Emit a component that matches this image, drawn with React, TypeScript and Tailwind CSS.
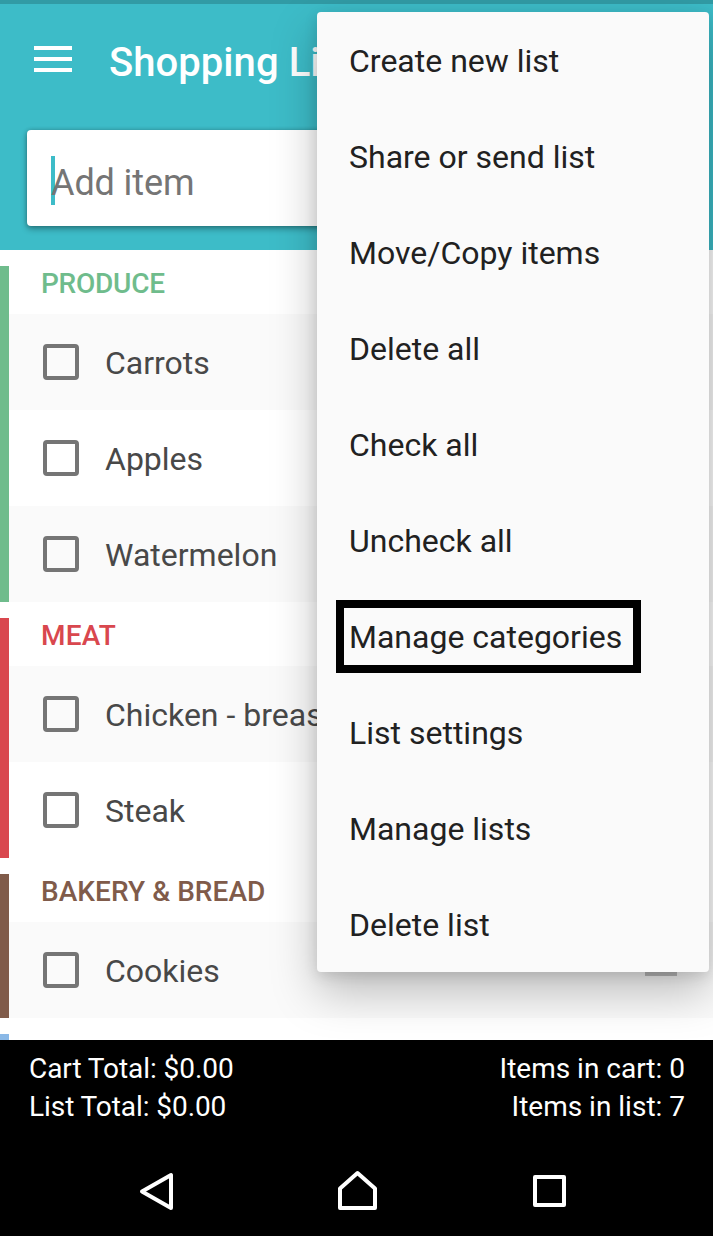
import { useState } from 'react';

type Category = {
  name: string;
  bar: string;
  text: string;
  items: string[];
};

const categories: Category[] = [
  {
    name: 'PRODUCE',
    bar: 'bg-[#6fbc8c]',
    text: 'text-[#6fbc8c] tracking-[-0.25px]',
    items: ['Carrots', 'Apples', 'Watermelon'],
  },
  {
    name: 'MEAT',
    bar: 'bg-[#d9474e]',
    text: 'text-[#d9474e] tracking-[0.2px]',
    items: ['Chicken - breast', 'Steak'],
  },
  {
    name: 'BAKERY & BREAD',
    bar: 'bg-[#805b4a]',
    text: 'text-[#805b4a] tracking-[0.05px]',
    items: ['Cookies'],
  },
  {
    name: '',
    bar: 'bg-[#8ab8e6]',
    text: 'text-[#8ab8e6]',
    items: [],
  },
];

const menuItems = [
  'Create new list',
  'Share or send list',
  'Move/Copy items',
  'Delete all',
  'Check all',
  'Uncheck all',
  'Manage categories',
  'List settings',
  'Manage lists',
  'Delete list',
];

function Header() {
  return (
    <header className="h-[250px] shrink-0 border-t-4 border-[#319ba5] bg-[#3dbcc8] pl-[27px]">
      <div className="flex h-[126px] items-start">
        <button className="ml-[7px] mt-[42px] flex w-[38px] flex-col gap-[7px]" aria-label="Open navigation">
          <span className="h-1 w-full bg-white" />
          <span className="h-1 w-full bg-white" />
          <span className="h-1 w-full bg-white" />
        </button>
        <h1 className="ml-[37px] mt-[35px] whitespace-nowrap text-[40px] font-medium leading-[48px] tracking-[0.05px] text-white">
          Shopping List
        </h1>
      </div>
      <div className="mr-[27px] flex h-24 items-center rounded bg-white pl-6 shadow-[0_3px_6px_rgba(0,0,0,0.32),0_0_4px_rgba(0,0,0,0.2)]">
        <span className="mt-[5px] h-[49px] w-1 bg-[#3dbcc8]" />
        <span className="-ml-1 mt-[9px] text-[36px] leading-[42px] tracking-[-0.1px] text-[#757575]">Add item</span>
      </div>
    </header>
  );
}

function CategoryGroup({ category }: { category: Category }) {
  const [checked, setChecked] = useState<string[]>([]);

  const toggle = (item: string) => {
    setChecked(checked.includes(item) ? checked.filter((i) => i !== item) : [...checked, item]);
  };

  return (
    <section className="flex shrink-0">
      <div className={`w-[9px] shrink-0 ${category.bar}`} />
      <div className="flex-1">
        <h2 className={`h-12 pl-8 pt-px text-[28px] font-medium leading-[34px] ${category.text}`}>
          {category.name}
        </h2>
        {category.items.map((item, index) => (
          <div
            key={item}
            className={`flex h-24 items-center pl-[34px] pr-9 ${index % 2 === 0 ? 'bg-[#fafafa]' : 'bg-white'}`}
          >
            <button
              role="checkbox"
              aria-checked={checked.includes(item)}
              aria-label={item}
              onClick={() => toggle(item)}
              className={`size-9 rounded border-4 border-[#757575] ${checked.includes(item) ? 'bg-[#757575]' : ''}`}
            />
            <span className="ml-[26px] mt-[2px] flex-1 text-[32px] leading-[38px] text-[#484848]">{item}</span>
            <div className="flex w-8 flex-col gap-1">
              <span className="h-1 bg-[#bdbdbd]" />
              <span className="h-1 bg-[#bdbdbd]" />
            </div>
          </div>
        ))}
      </div>
    </section>
  );
}

function OverflowMenu() {
  return (
    <div className="absolute left-[317px] top-3 flex w-[392px] flex-col rounded bg-[#fafafa] shadow-[0_20px_46px_rgba(0,0,0,0.25),0_4px_14px_rgba(0,0,0,0.12)]">
      {menuItems.map((item) => (
        <button
          key={item}
          className="relative flex h-24 items-center pl-8 pt-[2px] text-left text-[32px] leading-[38px] text-[#212121]"
        >
          {item}
          {item === 'Manage categories' && (
            <span className="absolute left-[19px] top-3 h-[73px] w-[305px] border-8 border-black" />
          )}
        </button>
      ))}
    </div>
  );
}

function Footer() {
  return (
    <footer className="relative h-[196px] shrink-0 bg-black text-white">
      <div className="flex justify-between pl-[29px] pr-7 pt-[10px] text-[28px] leading-[38px]">
        <div className="tracking-[-0.07px]">
          <p>Cart Total: $0.00</p>
          <p>List Total: $0.00</p>
        </div>
        <div className="text-right">
          <p>Items in cart: 0</p>
          <p>Items in list: 7</p>
        </div>
      </div>
      {/* Android navigation keys */}
      <div className="mt-[42px] flex items-start pl-[138px]">
        <svg className="h-12 w-10" viewBox="0 0 40 48" fill="none" stroke="white" strokeWidth="4" strokeLinejoin="round">
          <path d="M4 23.5 33 7v33Z" />
        </svg>
        <svg className="ml-[158px] h-12 w-[44px]" viewBox="0 0 44 48" fill="none" stroke="white" strokeWidth="4" strokeLinejoin="round">
          <path d="M4 40V20.500L21.500 5 39 20.500V40Z" />
        </svg>
        <svg className="ml-[151px] h-12 w-10" viewBox="0 0 40 48" fill="none" stroke="white" strokeWidth="4" strokeLinejoin="round">
          <path d="M4 9h29v28H4Z" />
        </svg>
      </div>
    </footer>
  );
}

export default function App() {
  return (
    <div className="relative flex h-[1236px] w-[713px] flex-col overflow-hidden bg-white font-[Roboto,sans-serif]">
      <Header />
      <main className="flex h-[790px] shrink-0 flex-col gap-4 overflow-hidden pt-4">
        {categories.map((category) => (
          <CategoryGroup key={category.bar} category={category} />
        ))}
      </main>
      <OverflowMenu />
      <Footer />
    </div>
  );
}
